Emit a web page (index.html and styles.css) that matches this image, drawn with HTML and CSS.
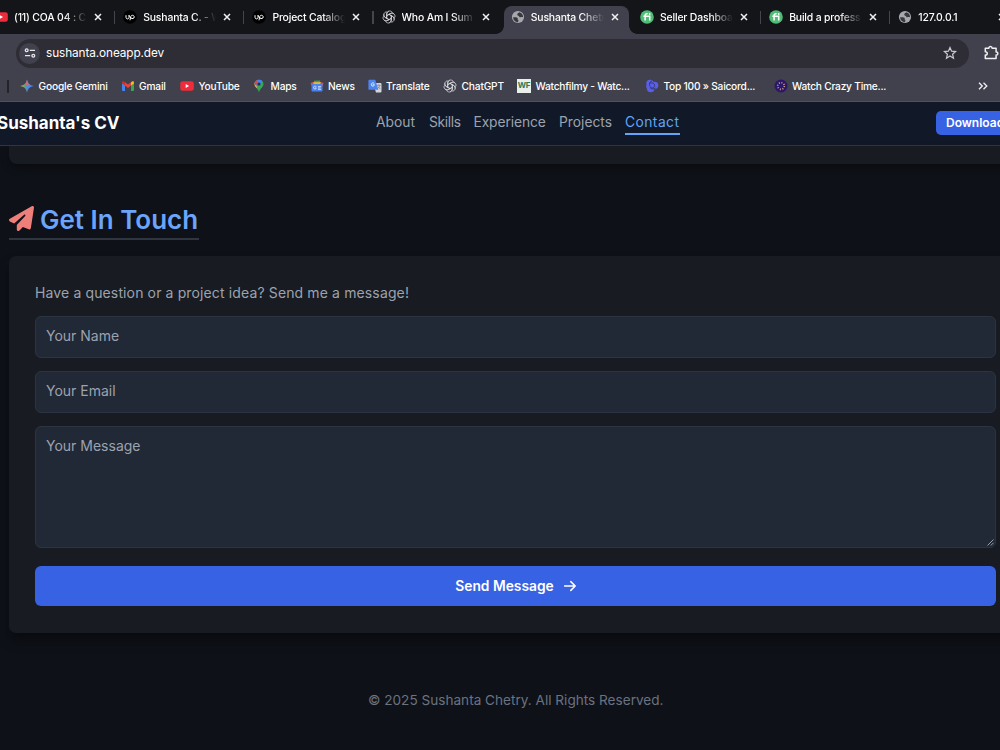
FILE: index.html
```html
<!DOCTYPE html>
<html lang="en">
<head>
<meta charset="utf-8">
<title>Sushanta Chetry</title>
<link rel="stylesheet" href="styles.css">
</head>
<body>
<svg class="defs" aria-hidden="true">
  <symbol id="globe" viewBox="0 0 14 14"><circle cx="7" cy="7" r="6.100" fill="#a7a8ad"/><path d="M2.100 7.300C4 7 6.200 7.100 6.700 8.100c.3.900-.6 1.200.300 1.700.8.400.3 1.500-.1 2.500C4.200 12.200 2.200 10.200 2.100 7.300zM8.300 2.200c-.3 1-1.900.7-2 1.700-.1.800.6 1 .2 1.500 1.300.1 1.700.7 1.900 1.600.9.400 2.300-.1 3.700.2.100-2.400-1.400-4.500-3.800-5z" fill="#37383e"/></symbol>
  <symbol id="gpt" viewBox="0 0 14 14"><g fill="none" stroke="#dcdce2" stroke-width=".75"><path id="petal" d="M4.700 8.300V4.100C4.700 2.200 6 1 7.600 1c1.300 0 2.200.6 2.700 1.500M4.700 5.700L8.500 3.500c1.100-.6 2.300-.4 3.200.5"/><use href="#petal" transform="rotate(60 7 7)"/><use href="#petal" transform="rotate(120 7 7)"/><use href="#petal" transform="rotate(180 7 7)"/><use href="#petal" transform="rotate(240 7 7)"/><use href="#petal" transform="rotate(300 7 7)"/></g></symbol>
  <symbol id="up" viewBox="0 0 14 14"><circle cx="7" cy="7" r="6.800" fill="#000"/><path d="M3 5.200v2.200c0 2 3 2 3 0V5.200c.6 1.600 1.300 2.700 2.400 3M7 10.300l.7-3.600c.6-2.100 3.600-1.700 3.500.3-.1 1.800-2 2-3.300.9" fill="none" stroke="#fff" stroke-width="1"/></symbol>
  <symbol id="fi" viewBox="0 0 14 14"><circle cx="7" cy="7" r="6.800" fill="#50bd76"/><path d="M3.400 6.200h6.300v4.300M5.100 10.500V5.600c0-1.500.8-2 2.500-1.800" fill="none" stroke="#fff" stroke-width="1.500"/><circle cx="9.700" cy="4" r=".9" fill="#fff"/></symbol>
  <symbol id="x" viewBox="0 0 8 8"><path d="M1 1l6 6M7 1L1 7" stroke="#f1f1f4" stroke-width="1.500" fill="none"/></symbol>
  <symbol id="yt" viewBox="0 0 14 14"><rect x=".3" y="2.200" width="13.500" height="9.600" rx="2.300" fill="#ee2c3c"/><path d="M5.700 5v4l3.400-2z" fill="#fff"/></symbol>
</svg>

<div class="tabs">
  <div class="tab"><svg class="fav"><use href="#yt"/></svg><span class="title">(11) COA 04 : C</span><svg class="close"><use href="#x"/></svg></div>
  <div class="tab split"><svg class="fav"><use href="#up"/></svg><span class="title">Sushanta C. - W</span><svg class="close"><use href="#x"/></svg></div>
  <div class="tab split"><svg class="fav"><use href="#up"/></svg><span class="title">Project Catalog</span><svg class="close"><use href="#x"/></svg></div>
  <div class="tab split"><svg class="fav"><use href="#gpt"/></svg><span class="title">Who Am I Sum</span><svg class="close"><use href="#x"/></svg></div>
  <div class="tab active"><svg class="fav"><use href="#globe"/></svg><span class="title">Sushanta Chetr</span><svg class="close"><use href="#x"/></svg></div>
  <div class="tab"><svg class="fav"><use href="#fi"/></svg><span class="title">Seller Dashboa</span><svg class="close"><use href="#x"/></svg></div>
  <div class="tab split"><svg class="fav"><use href="#fi"/></svg><span class="title">Build a profess</span><svg class="close"><use href="#x"/></svg></div>
  <div class="tab split"><svg class="fav"><use href="#globe"/></svg><span class="title">127.0.0.1</span><svg class="close"><use href="#x"/></svg></div>
</div>

<div class="toolbar">
  <div class="omnibox">
    <span class="site"><svg viewBox="0 0 12 12" width="12" height="12" fill="none" stroke="#e6e6ea" stroke-width="1.300"><circle cx="2.700" cy="3.300" r="1.400"/><path d="M5.800 3.300H11M1 8.700h5.200"/><circle cx="9.300" cy="8.700" r="1.400"/></svg></span>
    <span class="url">sushanta.oneapp.dev</span>
    <svg class="star" viewBox="0 0 14 14"><path d="M7 1.500l1.600 3.700 4 .35-3 2.650.9 3.950L7 10.050l-3.500 2.100.9-3.950-3-2.650 4-.35z" fill="none" stroke="#c9c9cf" stroke-width="1.200"/></svg>
  </div>
  <svg class="ext" viewBox="0 0 16 16"><path d="M1.300 3.300h3.500c0-2.400 3.300-2.400 3.300 0h4v3.600c2.400 0 2.400 3.200 0 3.200v3.500H1.300v-3.500c2.600 0 2.600-3.300 0-3.300z" fill="none" stroke="#f0f0f3" stroke-width="1.500" stroke-linejoin="round"/></svg>
</div>

<div class="bookmarks">
  <i class="bar"></i>
  <div class="bm"><svg viewBox="0 0 14 14"><defs><linearGradient id="gm" x1="0" y1=".6" x2="1" y2=".5"><stop offset="0" stop-color="#f2b93b"/><stop offset=".35" stop-color="#5c9c7d"/><stop offset=".55" stop-color="#4a8af4"/><stop offset="1" stop-color="#4a87f2"/></linearGradient></defs><path d="M7 .5c.9 3.900 2.600 5.600 6.500 6.500-3.900.9-5.600 2.600-6.500 6.500C6.100 9.600 4.400 7.900.5 7 4.400 6.100 6.100 4.400 7 .5z" fill="url(#gm)"/><path d="M7 .5c.4 2.200 1 3.600 2.100 4.900L7 6 5 5.500C6 4.500 6.600 3 7 .5z" fill="#d8686b"/></svg><span>Google Gemini</span></div>
  <div class="bm"><svg viewBox="0 0 14 14"><path d="M1 3.600l3 2.300v6H1.900a.9.900 0 01-.9-.9z" fill="#4583ee"/><path d="M13 3.600l-3 2.300v6h2.100a.9.900 0 00.9-.9z" fill="#34a853"/><path d="M4 3.300l3 2.300 3-2.300v3.300L7 9 4 6.600z" fill="#ea4335"/><path d="M1 3.600C1 2 2.700 2 4 3.300v3.300L1 4.500z" fill="#c93329"/><path d="M13 3.600C13 2 11.300 2 10 3.300v3.300l3-2.100z" fill="#fbbc04"/></svg><span>Gmail</span></div>
  <div class="bm"><svg><use href="#yt"/></svg><span>YouTube</span></div>
  <div class="bm"><svg viewBox="0 0 14 14"><clipPath id="pin"><path d="M7 .7c2.600 0 4.500 2 4.500 4.400 0 3-3.200 4-4.500 8.200C5.700 9.100 2.500 8.100 2.500 5.100 2.500 2.700 4.400.7 7 .7z"/></clipPath><g clip-path="url(#pin)"><rect width="14" height="14" fill="#35a75a"/><path d="M0 4h7L3 12 0 10z" fill="#fbbc04"/><path d="M0 0h12.500L5 8z" fill="#4285f4"/><path d="M0 0h4l2.500 4L2 7z" fill="#e64539"/></g><circle cx="7" cy="5.100" r="1.600" fill="#28324f"/></svg><span>Maps</span></div>
  <div class="bm"><svg viewBox="0 0 14 14"><path d="M4 1.700l6-.3.7 3H4z" fill="#36a556"/><path d="M.5 4l3-1.200L6 5 1.500 7z" fill="#dd4c40"/><path d="M3.500 3.200h7.600v3H3.500z" fill="#f2b730"/><path d="M13.500 4l-2.700-1L10 6l2.700 1z" fill="#dd4c40"/><path d="M1.600 5h10.900v6.600a1 1 0 01-1 1h-9a1 1 0 01-1-1z" fill="#4b83ee"/><path d="M6.300 7.500c-1.500-1-3 0-2.700 1.500.3 1.400 2.500 1.500 2.700-.1H5M8 7.600h3M8 9h2.500M8 10.400h3" stroke="#dce8ff" stroke-width=".8" fill="none"/></svg><span>News</span></div>
  <div class="bm"><svg viewBox="0 0 14 14"><path d="M5 4h7.600c.5 0 .9.400.9.900v7.600c0 .5-.4.900-.9.900H8z" fill="#d2d4da"/><path d="M1.300.800h6l3 10H1.300a.9.900 0 01-.9-.9V1.700c0-.5.400-.9.900-.9z" fill="#4e84ee"/><path d="M6.300 4.300c-1.600-1.200-3.200 0-3 1.600.3 1.800 3 1.700 3.100-.2H4.800" stroke="#e5edff" stroke-width=".9" fill="none"/><path d="M9 6.300h3.500M10.700 5.500v.8M11.900 6.500c-.4 1.500-1.400 2.600-2.400 3.100M9.900 7.500l2.300 2.500" stroke="#6f7784" stroke-width=".7" fill="none"/></svg><span>Translate</span></div>
  <div class="bm"><svg><use href="#gpt"/></svg><span>ChatGPT</span></div>
  <div class="bm long"><b class="wf">WF</b><span>Watchfilmy - Watc...</span></div>
  <div class="bm long"><svg viewBox="0 0 14 14"><g fill="#5a5fea"><circle cx="5" cy="4.500" r="3.700"/><circle cx="9.700" cy="6.300" r="3.600"/><circle cx="5.700" cy="9.500" r="3.800"/><circle cx="3.700" cy="7.500" r="2.500"/></g><path d="M4.500 4.500c3-1.500 5.300 0 5 2.300s-3.300 3-4.500.8M7 1.800C4.800 2.600 3.800 4.800 4.800 7M10.500 9c-1.600 1.300-4 1.300-5.600-.5" fill="none" stroke="#34365f" stroke-width=".9"/></svg><span>Top 100 » Saicord...</span></div>
  <div class="bm long"><svg viewBox="0 0 14 14"><circle cx="7" cy="7" r="6.500" fill="#2b1769"/><circle cx="7" cy="7" r="3.300" fill="none" stroke="#c99a90" stroke-width="1.700" stroke-dasharray="1 1.590"/></svg><span>Watch Crazy Time...</span></div>
  <svg class="more" viewBox="0 0 10 10"><path d="M1 1.700L4.300 5 1 8.300M5.500 1.700L8.800 5 5.500 8.300" fill="none" stroke="#f1f1f4" stroke-width="1.300"/></svg>
</div>

<header class="nav">
  <div class="logo">Sushanta's CV</div>
  <nav class="links"><a>About</a><a class="tight">Skills</a><a>Experience</a><a>Projects</a><a class="current">Contact</a></nav>
  <a class="download">Download</a>
</header>

<main class="page">
  <div class="previous"></div>
  <h2 class="heading"><svg viewBox="0 0 512 512"><path d="M498.100 5.600c10.100 7 15.400 19.100 13.500 31.200l-64 416c-1.500 9.700-7.400 18.200-16 23s-18.900 5.400-28 1.600L284 427.700l-68.500 74.100c-8.900 9.700-22.900 12.900-35.200 8.100S160 493.200 160 480V396.400c0-4 1.500-7.800 4.200-10.700L331.800 202.800c5.800-6.300 5.600-16-.4-22s-15.700-6.400-22-.7L106 360.800 17.700 316.600C7.100 311.300.3 300.700 0 288.900s5.900-22.800 16.100-28.700l448-256c10.700-6.100 23.900-5.500 34 1.400z" fill="#ef7f7b"/></svg><span>Get In Touch</span></h2>
  <form class="card">
    <p class="lead">Have a question or a project idea? Send me a message!</p>
    <div class="field">Your Name</div>
    <div class="field">Your Email</div>
    <div class="field area">Your Message<svg class="grip" viewBox="0 0 7 7"><path d="M.5 6.500l6-6M3.800 6.500l2.700-2.700" stroke="#a5abb5" stroke-width=".9"/></svg></div>
    <button class="send" type="button"><span>Send Message</span><svg viewBox="0 0 12 12"><path d="M.5 6H11M6.800 1.600L11.200 6 6.800 10.400" fill="none" stroke="#fff" stroke-width="1.500" stroke-linecap="round" stroke-linejoin="round"/></svg></button>
  </form>
  <footer class="foot"><span>© 2025 Sushanta Chetry. All Rights Reserved.</span></footer>
</main>
</body>
</html>
```

FILE: styles.css
```css
* { box-sizing: border-box; }
body { margin: 0; width: 1000px; height: 750px; overflow: hidden; background: #0e1118; color: #fff; font-family: Inter, "Liberation Sans", sans-serif; white-space: nowrap; }
svg { display: block; flex: none; }
.defs { position: absolute; width: 0; height: 0; }

.tabs { display: grid; grid-template-columns: repeat(8, 129.2px); height: 34px; margin-left: -15.5px; background: #141519; width: 1033px; }
.tab { position: relative; display: flex; align-items: center; height: 34px; padding-left: 9.500px; font-size: 10.400px; font-weight: 500; letter-spacing: -.15px; }
.tab.split::before { content: ""; position: absolute; left: 0; top: 11px; width: 1.500px; height: 13px; background: #44454f; }
.fav { width: 14px; height: 14px; }
.title { width: 76px; margin-left: 6px; mask-image: linear-gradient(90deg, #000 50px, transparent 73px); }
.close { width: 8px; height: 8px; margin-left: 4px; }
.tab.active::before { content: ""; position: absolute; left: 3px; right: 1.500px; top: 6px; bottom: 0; background: #40414c; border-radius: 8px 8px 0 0; }
.tab.active::after { content: ""; position: absolute; left: -5px; right: -6.500px; bottom: 0; height: 8px; background: radial-gradient(circle at 0 0, transparent 7.500px, #40414c 8px) left / 8px 8px no-repeat, radial-gradient(circle at 100% 0, transparent 7.500px, #40414c 8px) right / 8px 8px no-repeat; }
.tab > * { position: relative; z-index: 1; }

.toolbar { display: flex; align-items: center; height: 38px; background: #40414c; padding-left: 16px; }
.omnibox { display: flex; align-items: center; width: 955px; height: 29px; border-radius: 15px; background: #2e2d35; padding: 0 12px 0 3px; }
.site { display: grid; place-items: center; width: 21px; height: 21px; border-radius: 50%; background: #40414c; }
.url { margin-left: 6px; font-size: 11.800px; letter-spacing: -.1px; flex: 1; }
.star { width: 14px; height: 14px; }
.ext { width: 16px; height: 16px; margin-left: 15px; }

.bookmarks { display: grid; grid-template-columns: 20px 100.500px 59.500px 72px 57.500px 58px 75.500px 74px 128px 128.500px 204px 12px; align-items: center; height: 30px; padding-bottom: 1px; background: #40414c; border-bottom: 1px solid #51525c; }
.bar { width: 2px; height: 13px; margin-left: 7px; background: #23242b; }
.bm { display: flex; align-items: center; gap: 4.500px; font-size: 10.200px; font-weight: 500; letter-spacing: -.17px; }
.bm.long { letter-spacing: -.23px; }
.bm svg { width: 14px; height: 14px; }
.wf { width: 14px; height: 14px; background: #e9efeb; color: #2c7a50; font-size: 8px; line-height: 13px; text-align: center; letter-spacing: -.3px; }
.more { width: 10px; height: 10px; }

.nav { display: grid; grid-template-columns: 379px 557px 1fr; align-items: center; height: 44px; margin-left: -3px; width: 1003px; background: #111827; border-bottom: 1px solid #2f3645; }
.logo { font-size: 17px; font-weight: 700; margin-top: -1px; }
.links { display: grid; grid-template-columns: 53px 44.500px 85.500px 66px 55px; font-size: 13.800px; color: #9ca3af; line-height: 20px; margin-top: 0; }
.links a { justify-self: start; height: 23px; }
.links .tight { letter-spacing: -.35px; }
.links a:nth-child(3) { letter-spacing: -.1px; }
.links .current { color: #60a5fa; border-bottom: 2px solid #60a5fa; width: 54.500px; letter-spacing: .45px; }
.download { width: 100px; height: 24px; margin: -1px 0 0 3px; border-radius: 5px; padding-left: 10px; background: #3862e4; font-size: 12px; font-weight: 600; line-height: 24px; }

.page { padding-left: 9px; }
.previous { width: 1014px; height: 18px; background: #181b21; border-radius: 0 0 8px 8px; box-shadow: 0 4px 8px rgba(0,0,0,.3); }
.heading { display: flex; align-items: flex-start; width: 190px; height: 36px; margin: 40px 0 16px; border-bottom: 2px solid #303640; padding-top: 2px; color: #6ba4fb; font-size: 26px; line-height: 28px; font-weight: 600; }
.heading svg { width: 25px; height: 25px; margin-right: 6px; }
.card { width: 1014px; height: 377px; padding: 26px; border-radius: 7px; background: #181b22; box-shadow: 0 8px 12px rgba(0,0,0,.35); }
.lead { margin: 0 0 13px; height: 21px; color: #9ca3af; font-size: 14px; letter-spacing: .13px; line-height: 21px; }
.field { position: relative; width: 961px; height: 42px; margin-bottom: 13px; padding: 9px 10px; border: 1px solid #2c3442; border-radius: 6px; background: #212836; color: #9ca3af; font-size: 14px; line-height: 20px; }
.area { height: 122px; margin-bottom: 18px; }
.grip { position: absolute; right: 1px; bottom: 1px; width: 7px; height: 7px; }
.send { display: flex; justify-content: center; align-items: center; gap: 10px; width: 961px; height: 40px; padding: 0; border: 0; border-radius: 6px; background: #3862e4; color: #fff; font: 600 13.800px Inter, "Liberation Sans", sans-serif; }
.send svg { width: 12px; height: 12px; }
.foot { margin-left: 359px; margin-top: 57px; color: #6b7280; font-size: 13.600px; line-height: 20px; }
```
